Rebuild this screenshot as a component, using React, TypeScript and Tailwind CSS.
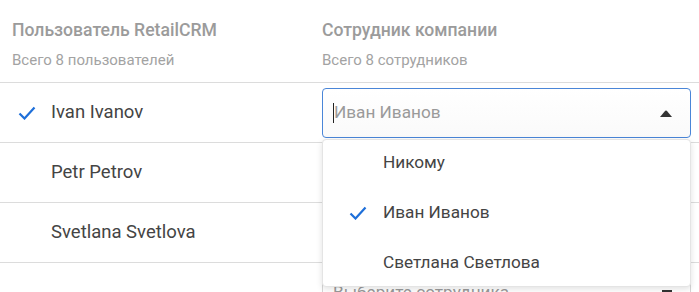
const users = [
  { id: 1, name: 'Ivan Ivanov', linked: true },
  { id: 2, name: 'Petr Petrov', linked: false },
  { id: 3, name: 'Svetlana Svetlova', linked: false },
  { id: 4, name: '', linked: false },
];

const options = [
  { label: 'Никому', selected: false },
  { label: 'Иван Иванов', selected: true },
  { label: 'Светлана Светлова', selected: false },
];

const CheckMark = ({ className }: { className?: string }) => (
  <svg viewBox="0 0 18 14" className={className} fill="none">
    <path d="M1.5 7.5l5 5L16.5 1.5" stroke="#1e6fd9" strokeWidth="2.2" />
  </svg>
);

const Caret = () => (
  <svg viewBox="0 0 12 7" className="w-3 h-[7px]">
    <path d="M0 7L4.6 1.4Q6 -0.2 7.4 1.4L12 7Z" fill="#333" />
  </svg>
);

const App = () => {
  return (
    <div className="w-[699px] h-[292px] overflow-hidden bg-white font-['Roboto',sans-serif] relative">
      <div className="grid grid-cols-[322px_369px_8px] h-[83px] border-b border-[#dcdcdc]">
        <div className="pl-3 pt-[20px]">
          <div className="text-[17.6px] font-medium text-[#9b9b9b] leading-5 whitespace-nowrap">Пользователь RetailCRM</div>
          <div className="text-[15px] text-[#a3a3a3] leading-4 mt-[12px] whitespace-nowrap">Всего 8 пользователей</div>
        </div>
        <div className="pt-[20px]">
          <div className="text-[17.6px] font-medium text-[#9b9b9b] leading-5">Сотрудник компании</div>
          <div className="text-[15px] text-[#a3a3a3] leading-4 mt-[12px]">Всего 8 сотрудников</div>
        </div>
        <div />
      </div>

      {users.map(user => (
        <div key={user.id} className="grid grid-cols-[322px_369px_8px] h-[60px] border-b border-[#dcdcdc]">
          <div className="flex items-center pl-[18px]">
            <div className="w-[33px]">
              {user.linked && <CheckMark className="w-[18px] h-[14px]" />}
            </div>
            <span className="text-[18.5px] text-[#444]">{user.name}</span>
          </div>
          <div className="pt-[5px]">
            <div
              className={
                user.id === 1
                  ? 'h-[50px] rounded-[4px] border border-[#4a86d8] flex items-center px-[10px] bg-gradient-to-b from-white to-[#fafafa]'
                  : 'h-[50px] rounded-[4px] border border-[#d6d6d6] flex items-center px-[10px]'
              }
            >
              {user.id === 1 && <span className="w-px h-[20px] bg-[#222]" />}
              <span className="text-[17.2px] text-[#9a9a9a] flex-1 whitespace-nowrap">
                {user.id === 1 ? 'Иван Иванов' : 'Выберите сотрудника'}
              </span>
              <span className="pr-[8px] flex items-center">
                {user.id === 1 ? <Caret /> : <span className="w-[10px] h-[6px] bg-[#333]" />}
              </span>
            </div>
          </div>
          <div />
        </div>
      ))}

      {/* open dropdown for the first row */}
      <div className="absolute left-[322px] top-[139px] w-[369px] h-[148px] bg-white rounded-[4px] border border-[#e4e4e4] shadow-[0_2px_6px_rgba(0,0,0,0.12)]">
        {options.map(opt => (
          <div key={opt.label} className="h-[50px] flex items-center pl-[26px] first:mt-[-2px]">
            <div className="w-[34px]">
              {opt.selected && <CheckMark className="w-[18px] h-[14px]" />}
            </div>
            <span className="text-[17.2px] text-[#444]">{opt.label}</span>
          </div>
        ))}
      </div>
    </div>
  );
};

export default App;
